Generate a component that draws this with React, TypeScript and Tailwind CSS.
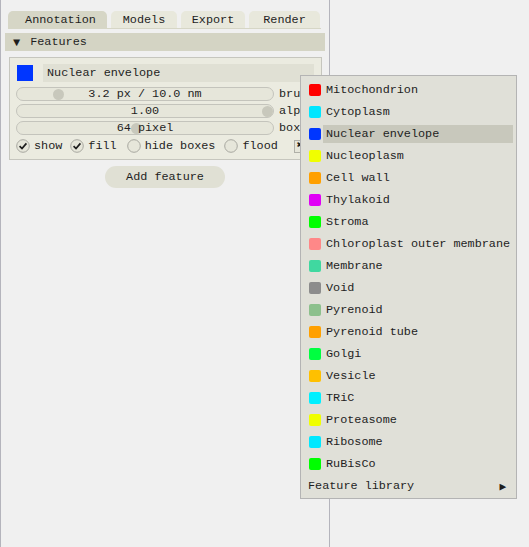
import React from 'react';

const FONT = { fontFamily: '"Liberation Mono", "DejaVu Sans Mono", monospace' };

const library: { name: string; color: string }[] = [
  { name: 'Mitochondrion', color: '#ff0000' },
  { name: 'Cytoplasm', color: '#00e6ff' },
  { name: 'Nuclear envelope', color: '#0036ff' },
  { name: 'Nucleoplasm', color: '#f0ff00' },
  { name: 'Cell wall', color: '#ffa000' },
  { name: 'Thylakoid', color: '#e000f5' },
  { name: 'Stroma', color: '#00ff00' },
  { name: 'Chloroplast outer membrane', color: '#ff8888' },
  { name: 'Membrane', color: '#40d8a0' },
  { name: 'Void', color: '#8c8c8c' },
  { name: 'Pyrenoid', color: '#8cc08c' },
  { name: 'Pyrenoid tube', color: '#ffa000' },
  { name: 'Golgi', color: '#00ff40' },
  { name: 'Vesicle', color: '#ffc000' },
  { name: 'TRiC', color: '#00f0ff' },
  { name: 'Proteasome', color: '#f0ff00' },
  { name: 'Ribosome', color: '#00e8ff' },
  { name: 'RuBisCo', color: '#00ff00' },
];

function Slider({ value, grab, label }: { value: string; grab: number; label: string }) {
  return (
    <div className="flex items-center h-[14px] mb-[3px]">
      <div className="relative w-[258px] h-[14px] rounded-full border border-[#c4c4bc] bg-[#e6e6da] flex items-center justify-center">
        <span
          className="absolute top-[1px] w-[11px] h-[11px] rounded-full bg-[#c8c8bc]"
          style={{ left: grab }}
        />
        <span className="relative pt-[1px]">{value}</span>
      </div>
      <span className="ml-[5px] pt-[1px]">{label}</span>
    </div>
  );
}

function Check({ on }: { on: boolean }) {
  return (
    <svg width="14" height="14" viewBox="0 0 14 14" className="shrink-0">
      <circle cx="7" cy="7" r="6.3" fill="#e6e6da" stroke="#a8a8a0" strokeWidth="1" />
      {on && <path d="M3.6 7.2 L6 9.6 L10.4 4.4" fill="none" stroke="#1e1e1e" strokeWidth="1.7" />}
    </svg>
  );
}

export default function App() {
  return (
    <div className="relative w-[529px] h-[547px] bg-[#f0f0f0] text-[11.8px] text-[#1e1e1e] overflow-hidden" style={FONT}>
      <div className="w-[330px] h-full border-l border-r border-[#b4b4bc]">
        {/* tabs */}
        <div className="pt-[11px] pl-[7px]">
          <div className="flex gap-[4px] h-[17px]">
            <div className="w-[99px] rounded-t-[5px] bg-[#d6d6c6] flex items-center justify-center pl-[6px] pt-[2px]">Annotation</div>
            <div className="w-[66px] rounded-t-[5px] bg-[#e8e8dc] flex items-center justify-center pt-[2px]">Models</div>
            <div className="w-[64px] rounded-t-[5px] bg-[#e8e8dc] flex items-center justify-center pt-[2px]">Export</div>
            <div className="w-[71px] rounded-t-[5px] bg-[#e8e8dc] flex items-center justify-center pt-[2px]">Render</div>
          </div>
          <div className="w-[313px] h-[1px] bg-[#d6d6c6]" />
        </div>

        {/* header */}
        <div className="ml-[4px] mt-[4px] w-[320px] h-[18px] bg-[#d4d4c4] flex items-center pt-[2px]">
          <span className="ml-[8px] text-[12px] leading-none">▼</span>
          <span className="ml-[10px]">Features</span>
        </div>

        {/* feature card */}
        <div className="ml-[8px] mt-[6px] w-[313px] h-[103px] border border-[#c6c6be] bg-[#ebebe0] pt-[6px] pl-[6px]">
          <div className="flex items-center h-[18px] mb-[5px]">
            <div className="ml-[1px] w-[16px] h-[16px] bg-[#0036ff]" />
            <div className="ml-[10px] w-[271px] h-[18px] bg-[#e0e0d4] flex items-center pl-[4px] pt-[2px]">Nuclear envelope</div>
          </div>
          <Slider value="3.2 px / 10.0 nm" grab={36} label="brush" />
          <Slider value="1.00" grab={245} label="alpha" />
          <Slider value="64 pixel" grab={114} label="box" />
          <div className="flex items-center h-[14px] mt-[4px]">
            <Check on />
            <span className="ml-[4px] pt-[1px]">show</span>
            <span className="ml-[8px]"><Check on /></span>
            <span className="ml-[4px] pt-[1px]">fill</span>
            <span className="ml-[10px]"><Check on={false} /></span>
            <span className="ml-[4px] pt-[1px]">hide boxes</span>
            <span className="ml-[9px]"><Check on={false} /></span>
            <span className="ml-[4px] pt-[1px]">flood</span>
            <div className="ml-[16px] w-[12px] h-[13px] border border-[#b0b0a8] bg-[#e6e6da] flex items-center justify-center text-[10px] leading-none">✖</div>
          </div>
        </div>

        {/* add feature */}
        <div className="ml-[104px] mt-[6px] w-[120px] h-[22px] rounded-full bg-[#e0e0d4] flex items-center justify-center pt-[2px]">
          Add feature
        </div>
      </div>

      {/* popup menu */}
      <div className="absolute left-[300px] top-[75px] w-[217px] border border-[#b4b4b4] bg-[#e0e0d8] pt-[3px] pb-[1px]">
        {library.map((f) => (
          <div key={f.name} className="flex items-center h-[22px]">
            <span className="ml-[8px] w-[12px] h-[12px] rounded-[2px] shrink-0" style={{ background: f.color }} />
            <span
              className={
                'ml-[2px] mr-[3px] flex-1 h-[18px] flex items-center pl-[3px] pt-[2px] ' +
                (f.name === 'Nuclear envelope' ? 'bg-[#c8c8bc]' : '')
              }
            >
              {f.name}
            </span>
          </div>
        ))}
        <div className="flex items-center h-[22px] pl-[7px] pr-[10px] justify-between pt-[2px]">
          <span>Feature library</span>
          <span className="text-[11px] leading-none">▶</span>
        </div>
      </div>
    </div>
  );
}
